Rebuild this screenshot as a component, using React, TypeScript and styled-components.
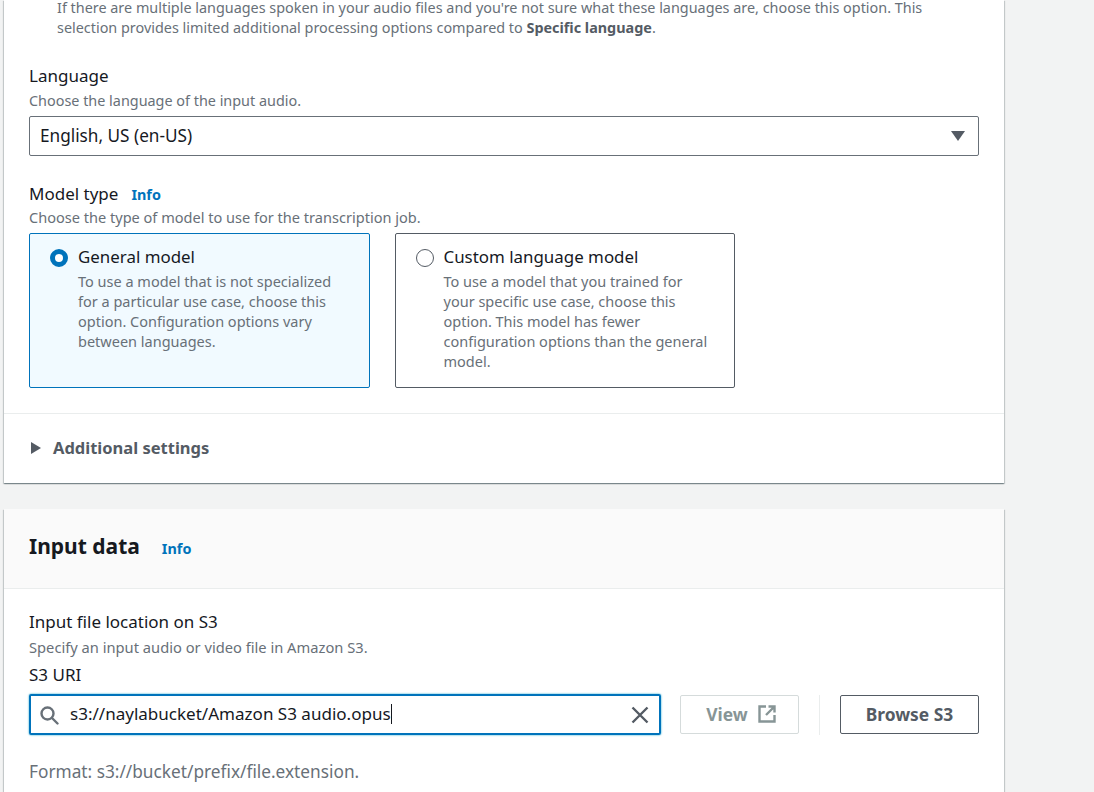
import { createGlobalStyle, styled } from "styled-components";

const GlobalStyle = createGlobalStyle`
  html, body {
    margin: 0;
    height: 100%;
    overflow: hidden;
    background: #f2f3f3;
    font-family: "Noto Sans", "Open Sans", sans-serif;
    color: #16191f;
  }
  * { box-sizing: border-box; }
`;

const Page = styled.div`
  width: 1000px;
  margin-left: 4px;
  display: flex;
  flex-direction: column;
  row-gap: 26px;
`;

const Card = styled.section`
  background: #fff;
  box-shadow: 0 1px 1px 0 rgba(0, 28, 36, 0.3), 1px 1px 1px 0 rgba(0, 28, 36, 0.15), -1px 1px 1px 0 rgba(0, 28, 36, 0.15);
`;

const CardBody = styled.div`
  padding: 0 25px 25px;
`;

const TopNote = styled.p`
  margin: -2px 0 27px 28px;
  font-size: 14.4px;
  line-height: 20px;
  color: #687078;
  width: 900px;

  b {
    font-weight: 700;
    color: #545b64;
  }
`;

const Label = styled.div`
  font-size: 17px;
  line-height: 22px;
`;

const Hint = styled.div<{ $size: number; $top: number }>`
  font-size: ${({ $size }) => $size}px;
  line-height: 20px;
  color: #687078;
  margin-top: ${({ $top }) => $top}px;
`;

const InfoLink = styled.a<{ $gap: number }>`
  margin-left: ${({ $gap }) => $gap}px;
  font-size: 14.4px;
  font-weight: 700;
  color: #0073bb;
`;

const Select = styled.div`
  height: 40px;
  margin-top: 5px;
  padding: 0 13px 2px 10px;
  display: flex;
  align-items: center;
  justify-content: space-between;
  border: 1px solid #687078;
  border-radius: 2px;
  font-size: 17.2px;
`;

const Caret = styled.span`
  width: 0;
  height: 0;
  margin-top: 2px;
  border-left: 7px solid transparent;
  border-right: 7px solid transparent;
  border-top: 10px solid #545b64;
`;

const ModelField = styled.div`
  margin-top: 27px;
`;

const Tiles = styled.div`
  display: flex;
  column-gap: 25px;
  margin-top: 6px;
`;

const Tile = styled.div<{ $active?: boolean }>`
  width: 340.5px;
  height: 155px;
  padding: 12px 20px;
  display: flex;
  column-gap: 10px;
  border: 1px solid ${({ $active }) => ($active ? "#0073bb" : "#545b64")};
  border-radius: 2px;
  background: ${({ $active }) => ($active ? "#f1faff" : "#fff")};
`;

const Radio = styled.span<{ $active?: boolean }>`
  flex: none;
  width: 18px;
  height: 18px;
  margin-top: 3px;
  border-radius: 50%;
  border: ${({ $active }) => ($active ? "5px solid #0073bb" : "1px solid #545b64")};
  background: #fff;
`;

const TileTitle = styled.div`
  font-size: 16.9px;
  line-height: 22px;
`;

const TileText = styled.div`
  margin-top: 3px;
  max-width: 270px;
  font-size: 14.5px;
  line-height: 20px;
  color: #687078;
`;

const Expander = styled.div`
  height: 70px;
  padding: 0 0 2px 27px;
  display: flex;
  align-items: center;
  column-gap: 12px;
  border-top: 1px solid #eaeded;
  font-size: 16.5px;
  font-weight: 700;
  color: #545b64;
`;

const ExpanderCaret = styled.span`
  width: 0;
  height: 0;
  border-top: 6.5px solid transparent;
  border-bottom: 6.5px solid transparent;
  border-left: 10px solid #545b64;
`;

const CardHeader = styled.header`
  height: 80px;
  padding: 0 25px;
  display: flex;
  align-items: center;
  background: #fafafa;
  border-bottom: 1px solid #eaeded;
`;

const CardTitle = styled.h2`
  margin: 0 0 5px;
  font-size: 21px;
  line-height: 28px;
  font-weight: 700;
`;

const InputBody = styled.div`
  padding: 22px 25px 40px;
`;

const UriLabel = styled.div`
  margin-top: 7px;
  font-size: 17px;
  line-height: 22px;
`;

const UriRow = styled.div`
  display: flex;
  align-items: center;
  margin-top: 8px;
`;

const SearchBox = styled.div`
  width: 632px;
  height: 41px;
  padding: 0 10px 0 8px;
  display: flex;
  align-items: center;
  border: 2px solid #0073bb;
  border-radius: 2px;
  box-shadow: 0 0 2px #00a1c9;
  font-size: 17.05px;
`;

const Value = styled.span`
  flex: 1;
  margin: 0 0 2px 11px;
  white-space: nowrap;
`;

const TextCursor = styled.span`
  display: inline-block;
  width: 1px;
  height: 20px;
  vertical-align: -4px;
  background: #16191f;
`;

const RowButton = styled.button<{ $disabled?: boolean }>`
  height: 39px;
  padding: 0 0 2px;
  display: flex;
  align-items: center;
  justify-content: center;
  column-gap: 10px;
  font-family: inherit;
  font-size: 17.4px;
  font-weight: 700;
  border-radius: 2px;
  background: #fff;
  border: 1px solid ${({ $disabled }) => ($disabled ? "#d5dbdb" : "#545b64")};
  color: ${({ $disabled }) => ($disabled ? "#879596" : "#545b64")};
`;

const ViewButton = styled(RowButton)`
  width: 119px;
  margin-left: 19px;
  padding-left: 3px;
`;

const BrowseButton = styled(RowButton)`
  width: 139px;
`;

const RowDivider = styled.span`
  width: 1px;
  height: 40px;
  margin: 0 20px;
  background: #eaeded;
`;

const FormatHint = styled.div`
  margin-top: 26px;
  font-size: 17.25px;
  line-height: 22px;
  color: #687078;
`;

const SearchIcon = () => (
  <svg width="20" height="20" viewBox="0 0 20 20" fill="none" stroke="#687078" strokeWidth="2.4">
    <circle cx="8.5" cy="8.5" r="6" />
    <path d="M13 13l5.5 5.5" strokeLinecap="round" />
  </svg>
);

const ClearIcon = () => (
  <svg width="18" height="18" viewBox="0 0 18 18" fill="none" stroke="#545b64" strokeWidth="2.4">
    <path d="M1.5 1.5l15 15M16.5 1.5l-15 15" />
  </svg>
);

const OpenIcon = () => (
  <svg width="18" height="18" viewBox="0 0 18 18" fill="none" stroke="#879596" strokeWidth="2.4">
    <path d="M8 1.5H1.5v15h15V10" />
    <path d="M10.5 1.5h6v6M16.5 1.5L8 10" />
  </svg>
);

export default function App() {
  return (
    <>
      <GlobalStyle />
      <Page>
        <Card>
          <CardBody>
            <TopNote>
              If there are multiple languages spoken in your audio files and you're not sure what these languages are, choose this option. This selection provides limited additional processing options compared to <b>Specific language</b>.
            </TopNote>
            <Label>Language</Label>
            <Hint $size={14.4} $top={4}>Choose the language of the input audio.</Hint>
            <Select>
              English, US (en-US)
              <Caret />
            </Select>
            <ModelField>
              <Label>
                Model type
                <InfoLink $gap={13}>Info</InfoLink>
              </Label>
              <Hint $size={14.55} $top={1}>Choose the type of model to use for the transcription job.</Hint>
              <Tiles>
                <Tile $active>
                  <Radio $active />
                  <div>
                    <TileTitle>General model</TileTitle>
                    <TileText>To use a model that is not specialized for a particular use case, choose this option. Configuration options vary between languages.</TileText>
                  </div>
                </Tile>
                <Tile>
                  <Radio />
                  <div>
                    <TileTitle>Custom language model</TileTitle>
                    <TileText>To use a model that you trained for your specific use case, choose this option. This model has fewer configuration options than the general model.</TileText>
                  </div>
                </Tile>
              </Tiles>
            </ModelField>
          </CardBody>
          <Expander>
            <ExpanderCaret />
            Additional settings
          </Expander>
        </Card>
        <Card>
          <CardHeader>
            <CardTitle>Input data</CardTitle>
            <InfoLink $gap={22}>Info</InfoLink>
          </CardHeader>
          <InputBody>
            <Label>Input file location on S3</Label>
            <Hint $size={14.7} $top={4}>Specify an input audio or video file in Amazon S3.</Hint>
            <UriLabel>S3 URI</UriLabel>
            <UriRow>
              <SearchBox>
                <SearchIcon />
                <Value>
                  s3://naylabucket/Amazon S3 audio.opus
                  <TextCursor />
                </Value>
                <ClearIcon />
              </SearchBox>
              <ViewButton $disabled>
                View
                <OpenIcon />
              </ViewButton>
              <RowDivider />
              <BrowseButton>Browse S3</BrowseButton>
            </UriRow>
            <FormatHint>Format: s3://bucket/prefix/file.extension.</FormatHint>
          </InputBody>
        </Card>
      </Page>
    </>
  );
}
